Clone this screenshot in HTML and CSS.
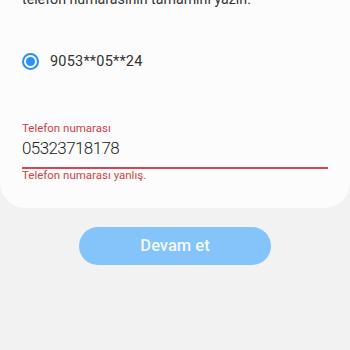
FILE: index.html
```html
<!DOCTYPE html>
<html lang="tr">
<head>
<meta charset="utf-8">
<link rel="stylesheet" href="styles.css">
</head>
<body>
<div class="card">
  <p class="intro">telefon numarasının tamamını yazın.</p>
  <label class="radio-row">
    <span class="radio"><span class="dot"></span></span>
    <span class="radio-text">9053**05**24</span>
  </label>
  <div class="field">
    <div class="field-label">Telefon numarası</div>
    <div class="field-value">05323718178</div>
    <div class="field-line"></div>
    <div class="field-error">Telefon numarası yanlış.</div>
  </div>
</div>
<div class="actions">
  <button class="btn">Devam et</button>
</div>
</body>
</html>
```

FILE: styles.css
```css
html, body {
  margin: 0;
  padding: 0;
}
body {
  background: #f2f2f2;
  font-family: Roboto, "Noto Sans", sans-serif;
  color: #333;
  width: 350px;
  height: 350px;
  overflow: hidden;
}
.card {
  background: #fcfcfc;
  border-radius: 0 0 26px 26px;
  padding: 0 22px 26px;
  margin-top: -11px;
}
.intro {
  margin: 0;
  font-size: 14.2px;
  line-height: 20px;
  color: #333;
}
.radio-row {
  display: flex;
  align-items: center;
  gap: 11px;
  margin-top: 42px;
  height: 20px;
}
.radio {
  width: 17px;
  height: 17px;
  box-sizing: border-box;
  border: 2px solid #2a8ff7;
  border-radius: 50%;
  display: flex;
  align-items: center;
  justify-content: center;
}
.dot {
  width: 9px;
  height: 9px;
  border-radius: 50%;
  background: #2a8ff7;
}
.radio-text {
  font-size: 14.5px;
  letter-spacing: 0.2px;
  color: #333;
}
.field {
  margin-top: 50px;
}
.field-label {
  font-size: 11.5px;
  line-height: 14px;
  color: #cf3f49;
}
.field-value {
  font-size: 17px;
  font-weight: 300;
  letter-spacing: -0.6px;
  line-height: 24px;
  margin-top: 1px;
  color: #222;
}
.field-line {
  height: 1.5px;
  background: #d9464f;
  margin-top: 7px;
}
.field-error {
  font-size: 11.5px;
  line-height: 13px;
  color: #cf3f49;
  margin-top: 0;
}
.actions {
  display: flex;
  justify-content: center;
  padding-top: 19px;
}
.btn {
  width: 192px;
  height: 38px;
  border: none;
  border-radius: 19px;
  background: #84c4fb;
  color: #f2f8ff;
  font-family: Roboto, sans-serif;
  font-size: 16.5px;
  font-weight: 500;
  padding: 0;
}
```
